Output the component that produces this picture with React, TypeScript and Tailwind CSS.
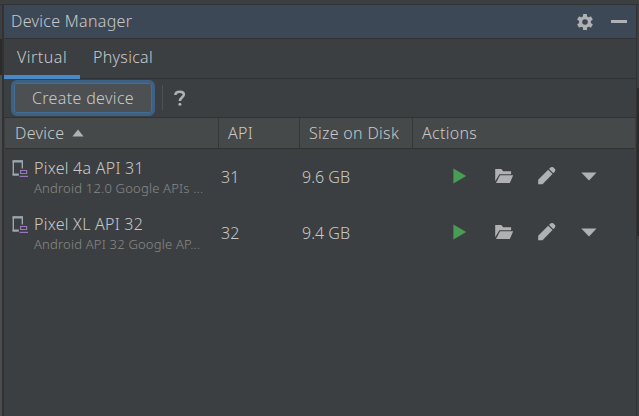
import React from "react";

function DeviceIcon() {
  return (
    <svg className="-ml-px mr-px mt-[5px] shrink-0" width="16" height="18" viewBox="0 0 16 18" fill="none">
      <path d="M6.6 14.9H1.3V1h9v7.4" stroke="#9aa7b0" strokeWidth="1.4" />
      <path d="M.6 1.6H11M.6 14.6h6.2" stroke="#9aa7b0" strokeWidth="2" />
      <path d="M8.6 10.5h6v3h-6z" stroke="#9876bb" strokeWidth="1.2" />
      <path d="M7.6 16.4H16" stroke="#9876bb" strokeWidth="1.2" />
    </svg>
  );
}

function Gear() {
  return (
    <svg width="16" height="16" viewBox="0 0 16 16">
      <g fill="#afb1b3">
        <circle cx="8" cy="8" r="6" />
        <rect x="6" y="0" width="4" height="16" rx=".6" />
        <rect x="6" y="0" width="4" height="16" rx=".6" transform="rotate(60 8 8)" />
        <rect x="6" y="0" width="4" height="16" rx=".6" transform="rotate(120 8 8)" />
      </g>
      <circle cx="8" cy="8" r="2.8" fill="#3d4856" />
    </svg>
  );
}

function Actions() {
  return (
    <div className="flex h-5 items-center">
      <svg width="14" height="16" viewBox="0 0 14 16"><path d="M.4.5 13.2 8 .4 15.5z" fill="#499c54" /></svg>
      <svg className="ml-7" width="19" height="16" viewBox="0 0 19 16" fill="#afb1b3">
        <path d="M.2 13.3V1h6.1l1.8 2.2h8v3H4.4z" />
        <path d="M5 7.2h13.2L14.8 15H1z" />
      </svg>
      <svg className="ml-6" width="18" height="18" viewBox="0 0 18 18" fill="#afb1b3">
        <path d="M.2 17.2v-4.5l10-10 4.3 4.3-10 10.2z" />
        <path d="m11.1 1.9 1.3-1.3q2-1.2 3.9.6 1.9 1.9.4 3.6l-1.3 1.4z" />
      </svg>
      <svg className="ml-[25px]" width="16" height="9" viewBox="0 0 16 9"><path d="M.3.4h15.2L8 8.5z" fill="#afb1b3" /></svg>
    </div>
  );
}

const devices = [
  { name: "Pixel 4a API 31", detail: "Android 12.0 Google APIs ...", api: "31", size: "9.6 GB" },
  { name: "Pixel XL API 32", detail: "Android API 32 Google AP...", api: "32", size: "9.4 GB" },
];

export default function App() {
  return (
    <div className="flex h-[416px] w-[639px] flex-col overflow-hidden whitespace-nowrap bg-[#3c3f41] font-['Noto_Sans','Open_Sans',sans-serif] text-[16px] font-light leading-5 tracking-[0.3px] text-[#c8c8c8]">
      <div className="h-[5px] shrink-0 border-b border-[#323232]" />
      <div className="flex min-h-0 flex-1">
        <div className="flex w-[2px] flex-col">
          <div className="h-[34px] bg-[#3c3f41]" />
          <div className="h-9 bg-[#2b2b2b]" />
          <div className="flex-1 bg-[#4b4d4e]" />
        </div>
        <div className="w-[2px] bg-[#323232]" />
        <main className="flex w-[632px] flex-col">
          <header className="flex h-[34px] items-center border-b border-[#323232] bg-[#3d4856] pl-[7px]">
            <span className="pb-[2px]">Device Manager</span>
            <span className="ml-auto"><Gear /></span>
            <span className="ml-[18px] mr-[9px] h-[2.5px] w-4 bg-[#afb1b3]" />
          </header>
          <nav className="flex h-10 border-b border-[#323232]">
            <div className="flex h-[40px] w-[76px] shrink-0 items-center border-b-4 border-[#4a88c7] pl-[13px] tracking-[0.5px]">Virtual</div>
            <div className="flex h-9 items-center pl-[13px]">Physical</div>
          </nav>
          <section className="flex h-[39px] border-b border-[#323232]">
            <button className="ml-[7px] mt-px flex h-9 w-36 items-center justify-center rounded-[6px] border-[3px] border-[#3d6185] bg-[#4c5052] tracking-[0.35px] outline-none ring-1 ring-inset ring-[#466d94]">
              Create device
            </button>
            <div className="ml-[7px] mt-[6px] h-[25px] w-px bg-[#515151]" />
            <svg className="ml-[11px]  mt-[11px]" width="12" height="17" viewBox="0 0 12 17">
              <path d="M1.3 5C1.5 2.6 3 1.7 5.9 1.7s4 1 4 2.9C9.9 7.1 5.9 7.5 5.9 11" fill="none" stroke="#afb1b3" strokeWidth="2.5" />
              <circle cx="5.9" cy="14.2" r="1.5" fill="#afb1b3" />
            </svg>
          </section>
          <div className="ml-px flex h-[31px] w-[630px] items-stretch border-b border-[#323232] bg-[#45494a]">
            <div className="flex w-[214px] items-center border-r border-[#35383a] pl-[10px]">
              Device
              <svg className="ml-[8px]" width="12" height="8" viewBox="0 0 12 8"><path d="M6 .5 11.6 7.4H.4z" fill="#afb1b3" /></svg>
            </div>
            <div className="flex w-[81px] items-center border-r border-[#35383a] pl-[9px]">API</div>
            <div className="flex w-[113px] items-center border-r border-[#35383a] pl-[9px]">Size on Disk</div>
            <div className="flex items-center pl-[9px]">Actions</div>
          </div>
          {devices.map((d) => (
            <div key={d.name} className="flex h-14 shrink-0 pl-[9px]">
              <div className="flex w-[208px] pt-[6px]">
                <DeviceIcon />
                <div className="ml-[5px] pt-[3px]">
                  <div className="tracking-[0.25px]">{d.name}</div>
                  <div className="text-[13px] tracking-[0.2px] text-[#8a8a8a]">{d.detail}</div>
                </div>
              </div>
              <div className="w-[81px] pt-[18px] tracking-normal">{d.api}</div>
              <div className="w-[151px] pt-[18px] tracking-normal">{d.size}</div>
              <div className="pt-[17px]"><Actions /></div>
            </div>
          ))}
        </main>
        <div className="w-px bg-[#323232]" />
        <div className="flex w-[2px] flex-col">
          <div className="h-[83px] bg-[#3c3f41]" />
          <div className="h-[148px] bg-[#2b2b2b]" />
          <div className="flex-1 bg-[#3c3f41]" />
        </div>
      </div>
    </div>
  );
}
